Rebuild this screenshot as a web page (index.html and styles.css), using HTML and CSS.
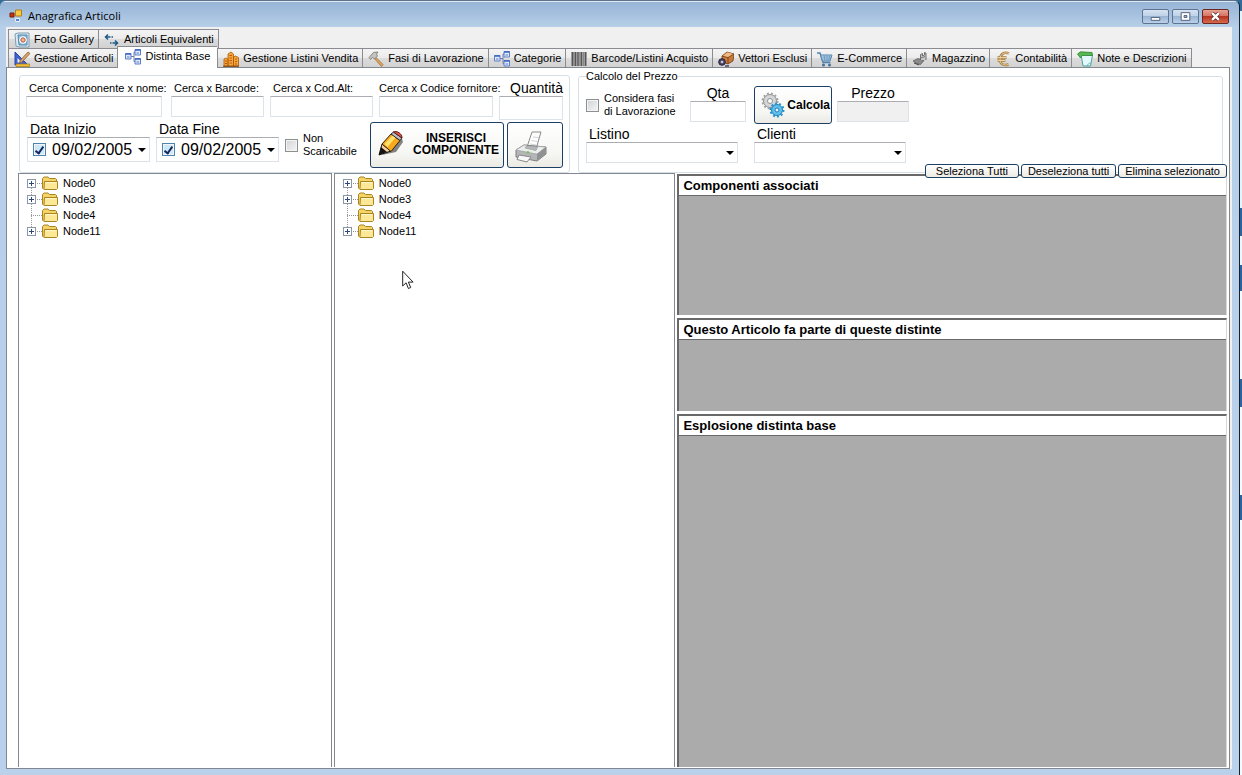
FILE: index.html
```html
<!DOCTYPE html>
<html lang="it">
<head>
<meta charset="utf-8">
<title>Anagrafica Articoli</title>
<link rel="stylesheet" href="styles.css">
</head>
<body>
<svg class="defs" aria-hidden="true">
  <symbol id="i-photo" viewBox="0 0 16 16"><path d="M1 2l3-1 11 0v14l-10 0-3-1z" fill="#dcecf6" stroke="#7f9bb0"/><path d="M4 3h9v10H5z" fill="#8fc1e0" stroke="#4d86ad"/><circle cx="9" cy="8" r="3.3" fill="#fff" stroke="#fff"/><circle cx="9" cy="8" r="2.2" fill="#f0b49a" stroke="#b4583c"/></symbol>
  <symbol id="i-arrows" viewBox="0 0 16 16"><path d="M1.500 5h5M4 2.500L1.500 5 4 7.500M13.500 11h-5M11 8.500l2.500 2.500-2.500 2.500" fill="none" stroke="#1d5a86" stroke-width="1.500"/><path d="M7.500 5h1.500M6 11h1.500" stroke="#1d5a86" stroke-width="1.500"/></symbol>
  <symbol id="i-ruler" viewBox="0 0 16 16"><path d="M1 1v13h13z" fill="#3e63cf" stroke="#2746a4"/><path d="M3.500 7v4.500H8z" fill="#e8eefc"/><path d="M14 1l2 1.500L8 11l-2.500 1 .8-2.700z" fill="#d9a56a" stroke="#7d4f22" stroke-width=".7"/><path d="M2 13h13.500v2.500H2z" fill="#f2c13c" stroke="#a87710" stroke-width=".7"/></symbol>
  <symbol id="i-tree" viewBox="0 0 16 16"><path d="M6 7.500h3M9 3v9.500h1.500M9 3h1.500" fill="none" stroke="#6e7fa8"/><path d="M.5 4.500h5.500v5.500H.5zM10 .5h5.500V6H10zM10 9.500h5.500V15H10z" fill="#dfe9fb" stroke="#5b7fc9"/><path d="M.5 5h5.500M10 1h5.500M10 10h5.500" stroke="#4166bd" stroke-width="1.500"/><path d="M2 8h2.500M11.500 4H14M11.500 13H14" stroke="#5b7fc9"/></symbol>
  <symbol id="i-city" viewBox="0 0 16 16"><path d="M1 15V8l2-1 2 1v7zM5 15V3l3-2 2.500 2v12zM10.500 15V6l2-1 3 1.500V15z" fill="#f5a63a" stroke="#a95a0c" stroke-width=".8"/><path d="M6.500 4.500h2.500M6.500 7h2.500M6.500 9.500h2.500M6.500 12h2.500M12 8h2M12 10.500h2M12 13h2M2 10h2M2 12.500h2" stroke="#c4560b"/><path d="M0 15.300h16" stroke="#7c4410"/></symbol>
  <symbol id="i-hammer" viewBox="0 0 16 16"><path d="M7 5.500l8 8-1.500 2L6 7z" fill="#e3a45c" stroke="#96602a" stroke-width=".7"/><path d="M1 6.500L5.500 1.500 10 1 8.500 3l1 2-3 3-2-1.500L2.500 8.500z" fill="#c3c3bf" stroke="#77736b" stroke-width=".8"/></symbol>
  <symbol id="i-barcode" viewBox="0 0 16 16"><path d="M0 1h16v14H0z" fill="#a8a8a8"/><path d="M1.500 1v14M4.500 1v14M7 1v14M10.500 1v14M14.500 1v14" stroke="#555" stroke-width="1.300"/><path d="M3 1v14M9 1v14M12.500 1v14" stroke="#777" stroke-width=".7"/></symbol>
  <symbol id="i-box" viewBox="0 0 16 16"><path d="M4 5l5-4 7 2-1 7-5 3-6-2z" fill="#c9793a" stroke="#6e3c17" stroke-width=".8"/><path d="M4 5l6 1.500L16 3M10 6.500V13" fill="none" stroke="#6e3c17" stroke-width=".8"/><path d="M5 4.700L9.500 1.300l5.500 1.700-5 3z" fill="#eeb982"/><circle cx="4" cy="11" r="3.300" fill="#4a4566" stroke="#29253d"/><circle cx="4" cy="11" r="1.300" fill="#cfc6d8"/><path d="M7 15h4" stroke="#4a4566" stroke-width="1.500"/></symbol>
  <symbol id="i-cart" viewBox="0 0 16 16"><path d="M0 2h3l3 9.500h7.500" fill="none" stroke="#5284ad" stroke-width="1.400"/><path d="M3.500 4H15l-2 6H5.500z" fill="#c8def0" stroke="#5284ad"/><path d="M4.500 6h10M5 8h9M7 4l1 6M10 4v6M13 4l-1.500 6" stroke="#5f92bb" stroke-width=".8"/><circle cx="6.500" cy="14" r="1.500" fill="#41729a"/><circle cx="12.500" cy="14" r="1.500" fill="#41729a"/></symbol>
  <symbol id="i-store" viewBox="0 0 16 16"><path d="M1 10l5-2.500 6 2-3.500 4-3.500-.8z" fill="#8b8b8b" stroke="#555" stroke-width=".7"/><path d="M8.500 9V3.500l2-1V5l2-1V1.500l1.500 .5v7" fill="#c9c9c9" stroke="#555" stroke-width=".8"/><path d="M9 7l4-1.500" stroke="#666" stroke-width=".8"/><path d="M2 12l5 2" stroke="#444"/></symbol>
  <symbol id="i-euro" viewBox="0 0 16 16"><path d="M14 2.500C9 .5 5.500 3 5 8s4 7 8.500 5.500M2.500 6.500h9M2.500 9.500h8" fill="none" stroke="#a57b3b" stroke-width="2.400"/><path d="M14 2.500C9 .5 5.500 3 5 8s4 7 8.500 5.500M2.500 6.500h9M2.500 9.500h8" fill="none" stroke="#ecd3a1" stroke-width="1"/></symbol>
  <symbol id="i-note" viewBox="0 0 16 16"><path d="M4 3l11.500 1-2 11H6z" fill="#e4f7fb" stroke="#4aa3a0"/><path d="M.5 3L3.500.8 15 1.500l.5 3L5 4.500 3.500 7z" fill="#57b84d" stroke="#27823a" stroke-width=".8"/><path d="M10 15c1-2 2-3 3.800-3" fill="none" stroke="#65b3b0"/></symbol>
  <symbol id="i-folder" viewBox="0 0 16 14"><path d="M.5 12V2.500L2 1h4l1.500 1.500h6l1 1V12l-1 1.500H2z" fill="#f4d469" stroke="#a98420"/><path d="M2.500 5.500h13v7l-1 1H3l-1-1z" fill="#fbe795" stroke="#a98420"/><path d="M3.500 6.700h11" stroke="#fff8d0"/></symbol>
</svg>

<div class="window">
  <header class="titlebar">
    <svg class="app-icon" viewBox="0 0 14 14" aria-hidden="true"><path d="M1 4h4v4H1z" fill="#c33417" stroke="#7c1c08"/><path d="M6.500 1h6v6h-6z" fill="#f7c945" stroke="#b4800f"/><path d="M6.500 9.500h4v3h-4z" fill="#4c85d8" stroke="#e8f0fb"/></svg>
    <h1 class="title">Anagrafica Articoli</h1>
    <div class="controls">
      <button class="ctl" type="button" aria-label="Riduci a icona"><svg viewBox="0 0 26 13"><path d="M8.500 7.500h9v3h-9z" fill="#fff" stroke="#50617a"/></svg></button>
      <button class="ctl" type="button" aria-label="Ingrandisci"><svg viewBox="0 0 26 13"><path d="M8.500 2.500h9v8h-9z" fill="#fff" stroke="#50617a"/><path d="M11.500 5.500h3v2h-3z" fill="#9db8d8" stroke="#50617a"/></svg></button>
      <button class="ctl ctl-close" type="button" aria-label="Chiudi"><svg viewBox="0 0 26 13"><path d="M9.500 3l7 7M16.500 3l-7 7" stroke="#5b2a2a" stroke-width="4"/><path d="M9.500 3l7 7M16.500 3l-7 7" stroke="#fff" stroke-width="2.400"/></svg></button>
    </div>
  </header>

  <main class="client">
    <nav class="tabs" role="tablist" aria-label="Sezioni">
      <div class="tab-row">
        <button class="tab" role="tab" type="button"><svg><use href="#i-photo"/></svg>Foto Gallery</button>
        <button class="tab" role="tab" type="button"><svg><use href="#i-arrows"/></svg>Articoli Equivalenti</button>
      </div>
      <div class="tab-row">
        <button class="tab" role="tab" type="button"><svg><use href="#i-ruler"/></svg>Gestione Articoli</button>
        <button class="tab tab-on" role="tab" type="button" aria-selected="true"><svg><use href="#i-tree"/></svg>Distinta Base</button>
        <button class="tab" role="tab" type="button"><svg><use href="#i-city"/></svg>Gestione Listini Vendita</button>
        <button class="tab" role="tab" type="button"><svg><use href="#i-hammer"/></svg>Fasi di Lavorazione</button>
        <button class="tab" role="tab" type="button"><svg><use href="#i-tree"/></svg>Categorie</button>
        <button class="tab" role="tab" type="button"><svg><use href="#i-barcode"/></svg>Barcode/Listini Acquisto</button>
        <button class="tab" role="tab" type="button"><svg><use href="#i-box"/></svg>Vettori Esclusi</button>
        <button class="tab" role="tab" type="button"><svg><use href="#i-cart"/></svg>E-Commerce</button>
        <button class="tab" role="tab" type="button"><svg><use href="#i-store"/></svg>Magazzino</button>
        <button class="tab" role="tab" type="button"><svg><use href="#i-euro"/></svg>Contabilità</button>
        <button class="tab" role="tab" type="button"><svg><use href="#i-note"/></svg>Note e Descrizioni</button>
      </div>
    </nav>

    <section class="page">
      <div class="toolbar">
        <div class="group search" role="group" aria-label="Inserimento componente">
          <div class="line">
            <div class="field w-name"><label for="nome">Cerca Componente x nome:</label><input id="nome" type="text"></div>
            <div class="field w-bar"><label for="barcode">Cerca x Barcode:</label><input id="barcode" type="text"></div>
            <div class="field w-alt"><label for="alt">Cerca x Cod.Alt:</label><input id="alt" type="text"></div>
            <div class="field w-sup"><label class="flush" for="forn">Cerca x Codice fornitore:</label><input id="forn" type="text"></div>
            <div class="field w-qty"><label class="big end" for="quant">Quantità</label><input class="tall" id="quant" type="text"></div>
          </div>
          <div class="line dates">
            <div class="field w-date">
              <label class="big" for="inizio">Data Inizio</label>
              <div class="date"><input type="checkbox" checked aria-label="Usa data inizio"><input id="inizio" type="text" value="09/02/2005"><button class="drop" type="button" aria-label="Apri calendario inizio"></button></div>
            </div>
            <div class="field w-date">
              <label class="big" for="fine">Data Fine</label>
              <div class="date"><input type="checkbox" checked aria-label="Usa data fine"><input id="fine" type="text" value="09/02/2005"><button class="drop" type="button" aria-label="Apri calendario fine"></button></div>
            </div>
            <label class="check grow"><input type="checkbox"><span>Non<br>Scaricabile</span></label>
            <div class="actions">
              <button class="btn btn-insert" type="button">
                <svg viewBox="0 0 28 28" aria-hidden="true"><path d="M5 25l14-3 7-10-2-6-3 1z" fill="#333" opacity=".6"/><path d="M2 25l3-11 9 7z" fill="#f3d2a0" stroke="#1c1410"/><path d="M2 25l2-8 6 5z" fill="#161212"/><path d="M5 14L14 4l9 6.500L14 21.500z" fill="#f6a91c" stroke="#30200c"/><path d="M7.500 14L16 5l3 2-8.500 10z" fill="#ffe06a"/><path d="M14 4l2.500-2 8.500 6-2 2.500z" fill="#b9bdc2" stroke="#2c2c30"/><path d="M16.500 2c3-2 9 2 8.500 6z" fill="#e0574c" stroke="#5f1712"/></svg>
                <span>INSERISCI<br>COMPONENTE</span>
              </button>
              <button class="btn btn-print" type="button" aria-label="Stampa"><svg viewBox="0 0 34 34"><path d="M13 17L18 2l9 0-5 17z" fill="#fdfdfd" stroke="#8a8a8a"/><path d="M16 14l6 1M17.500 10.500l6 1M19 7l6 .5" stroke="#d0d3d6"/><path d="M2 20l8-5 22 2v7l-9 7-21-4z" fill="#b3b5b6" stroke="#7d7f80"/><path d="M2 20l8-5 3 .3L11 18l11 2.500 2-4.200 8 .8-9 7z" fill="#eceded" stroke="#9d9fa0" stroke-width=".7"/><path d="M23 24v7l9-7v-7z" fill="#8f9192"/><path d="M5 25l12 2-4 5-10-2.500z" fill="#f8f8f8" stroke="#888"/><path d="M13 22l2 .5" stroke="#66c83a" stroke-width="2"/></svg></button>
            </div>
          </div>
        </div>

        <fieldset class="group price">
          <legend>Calcolo del Prezzo</legend>
          <div class="line">
            <label class="check w-phase"><input type="checkbox"><span>Considera fasi<br>di Lavorazione</span></label>
            <div class="field w-small"><label class="big mid" for="qta">Qta</label><input id="qta" type="text"></div>
            <div class="calc">
              <button class="btn btn-calc" type="button">
                <svg viewBox="0 0 24 26" aria-hidden="true"><circle cx="9" cy="9" r="6.500" fill="#d3d5d7" stroke="#8f9294"/><circle cx="9" cy="9" r="7.500" fill="none" stroke="#a2a5a7" stroke-width="2" stroke-dasharray="2 2"/><circle cx="9" cy="9" r="2.500" fill="#fff" stroke="#8f9294"/><circle cx="16" cy="18" r="5.500" fill="#5fc0ec" stroke="#1f7fb8"/><circle cx="16" cy="18" r="6.500" fill="none" stroke="#2a93cd" stroke-width="2" stroke-dasharray="2 2"/><circle cx="16" cy="18" r="2" fill="#e9f8ff" stroke="#1f7fb8"/></svg>
                Calcola
              </button>
              <div class="field w-price"><label class="big mid" for="prezzo">Prezzo</label><input id="prezzo" type="text" disabled></div>
            </div>
          </div>
          <div class="line lists">
            <div class="field w-list"><label class="big" for="listino">Listino</label><div class="combo"><select id="listino"><option></option></select></div></div>
            <div class="field w-list"><label class="big" for="clienti">Clienti</label><div class="combo"><select id="clienti"><option></option></select></div></div>
          </div>
        </fieldset>
      </div>

      <div class="split">
        <ul class="tree" aria-label="Componenti">
          <li class="node more"><svg><use href="#i-folder"/></svg>Node0</li>
          <li class="node more"><svg><use href="#i-folder"/></svg>Node3</li>
          <li class="node"><svg><use href="#i-folder"/></svg>Node4</li>
          <li class="node more"><svg><use href="#i-folder"/></svg>Node11</li>
        </ul>
        <ul class="tree" aria-label="Distinta">
          <li class="node more"><svg><use href="#i-folder"/></svg>Node0</li>
          <li class="node more"><svg><use href="#i-folder"/></svg>Node3</li>
          <li class="node"><svg><use href="#i-folder"/></svg>Node4</li>
          <li class="node more"><svg><use href="#i-folder"/></svg>Node11</li>
        </ul>
        <div class="grids">
          <div class="pick">
            <button class="mini" type="button">Seleziona Tutti</button>
            <button class="mini" type="button">Deseleziona tutti</button>
            <button class="mini" type="button">Elimina selezionato</button>
          </div>
          <section class="grid"><h2>Componenti associati</h2></section>
          <section class="grid"><h2>Questo Articolo fa parte di queste distinte</h2></section>
          <section class="grid"><h2>Esplosione distinta base</h2></section>
        </div>
      </div>
    </section>
  </main>
</div>
<svg class="cursor" viewBox="0 0 12 20" aria-hidden="true"><path d="M.7 1.200v14.800l3.400-3.200 2.300 5.700 2.300-1-2.300-5.400h4.700z" fill="#fff" stroke="#222"/></svg>
</body>
</html>
```

FILE: styles.css
```css
*, *::before, *::after { box-sizing: border-box; }

body {
  margin: 0;
  height: 100vh;
  display: flex;
  padding-right: 2px;
  overflow: hidden;
  font: 11px/13px "Liberation Sans", Arial, sans-serif;
  color: #000;
  background: linear-gradient(#2f6c9c 0 11px, #e2f5fb 11px 208px, #2c639c 208px 236px, #eef8fc 236px 265px, #2c639c 265px 291px, #f4fafd 291px 379px, #2c639c 379px 407px, #f4fafd 407px 495px, #2c639c 495px 520px, #f4fafd 520px);
}

button, input, select { font: inherit; color: inherit; margin: 0; }

.defs { position: absolute; width: 0; height: 0; }

/* Window frame */
.window {
  flex: 1;
  min-width: 0;
  display: flex;
  flex-direction: column;
  padding: 0 7px 6px 6px;
  border-right: 1px solid #14242f;
  border-top: 1px solid #5c7389;
  border-radius: 6px 6px 0 0;
  background: linear-gradient(#dfeaf5 0 1px, #98b5d6 1px, #a4bfde 12px, #b7cfe8 26px, #b9d1ea);
}

.titlebar { display: flex; align-items: center; height: 26px; padding: 4px 3px 0 3px; }
.app-icon { width: 14px; height: 14px; }
.title { flex: 1; margin: 0 0 0 5px; font: 11px/16px "Open Sans", "Noto Sans", sans-serif; }
.controls { display: flex; gap: 3px; }
.ctl {
  width: 27px;
  height: 15px;
  padding: 0;
  border: 1px solid #5f7390;
  border-radius: 2px;
  background: linear-gradient(#d5e3f2, #bdd0e6 50%, #9ab5d3 50%, #b9d0e8);
}
.ctl svg { display: block; width: 100%; height: 100%; }
.ctl-close { border-color: #6b2624; background: linear-gradient(#e5a394, #d6705e 50%, #b93421 50%, #d66a4c); }

.client { flex: 1; min-height: 0; display: flex; flex-direction: column; padding-right: 2px; background: #f0f0f0; }

/* Tabs */
.tabs { padding: 2px 2px 0; }
.tab-row { display: flex; align-items: flex-end; height: 19px; }
.tab {
  display: flex;
  align-items: center;
  gap: 4px;
  height: 19px;
  padding: 1px 4px 0 5px;
  border: 1px solid #8a8c92;
  border-bottom: 0;
  border-right-width: 0;
  background: linear-gradient(#f4f4f4, #ebebeb 50%, #dcdcdc 50%, #d2d2d2);
  white-space: nowrap;
}
.tab:last-child { border-right-width: 1px; }
.tab svg { width: 16px; height: 16px; }
.tab-on { position: relative; height: 22px; padding: 0 7px 2px; margin-bottom: -1px; background: #fff; }

.page { flex: 1; min-height: 0; display: flex; flex-direction: column; padding: 2px 2px 1px 11px; border: 1px solid #828790; background: #fff; }

/* Search and price groups */
.toolbar { display: flex; gap: 8px; padding: 0 4px 0 1px; }
.group { margin: 0; min-width: 0; border: 1px solid #d5dfe5; border-radius: 3px; }
.search { display: flex; flex-direction: column; gap: 2px; margin-top: 5px; padding: 4px 6px 3px; }
.price { flex: 1; padding: 4px 7px 9px; }
.price legend { padding: 0; line-height: 12px; }
.line { display: flex; gap: 6px; }
.dates { padding-left: 1px; }
.lists { gap: 16px; margin-top: 3px; }
.field { display: flex; flex-direction: column; white-space: nowrap; }
.field label { padding-left: 3px; line-height: 16px; }
.field .flush { padding-left: 0; }
.field .big { font-size: 14px; line-height: 15px; }
.field .end { padding: 0; line-height: 16px; text-align: right; }
.field .mid { padding: 0; text-align: center; }
.w-name { width: 136px; margin-right: 3px; }
.w-bar { width: 93px; }
.w-alt { width: 103px; }
.w-sup { width: 114px; }
.w-qty { width: 64px; }
.w-date { width: 123px; }
.w-phase { width: 96px; }
.w-small { width: 56px; }
.w-price { width: 72px; }
.w-list { width: 152px; }

input[type="text"], select {
  width: 100%;
  height: 21px;
  padding: 0 3px;
  border: 1px solid #dde3ea;
  border-top-color: #abadb3;
  border-radius: 1px;
  background: #fff;
}
input.tall[type="text"] { height: 24px; }
input[type="text"]:disabled { background: #f0f0f0; }

input[type="checkbox"] {
  appearance: none;
  display: grid;
  place-items: center;
  flex: none;
  width: 13px;
  height: 13px;
  border: 1px solid #8e8f8f;
  background: linear-gradient(135deg, #cfd2d5, #f6f6f6);
  box-shadow: inset 0 0 0 1px #f4f4f4;
}
input[type="checkbox"]:checked { border-color: #4a86ad; background: #cde9f8; }
input[type="checkbox"]:checked::before {
  content: "";
  width: 5px;
  height: 9px;
  border: solid #15265f;
  border-width: 0 2px 2px 0;
  transform: rotate(35deg);
}

.date {
  display: flex;
  align-items: center;
  height: 25px;
  padding: 0 3px 0 5px;
  border: 1px solid #dde3ea;
  border-top-color: #abadb3;
}
.date input[type="text"] { flex: 1; min-width: 0; padding: 0 0 0 6px; border: 0; background: none; font-size: 16px; }
.drop { display: grid; place-items: center; width: 9px; height: 21px; padding: 0; border: 0; background: none; }
.drop::before, .combo::after { content: ""; border: 4px solid transparent; border-top-color: #000; border-bottom: 0; }
.combo { display: grid; align-items: center; }
.combo select { grid-area: 1 / 1; appearance: none; }
.combo::after { grid-area: 1 / 1; justify-self: end; margin-right: 4px; pointer-events: none; }

.check { display: flex; align-items: center; gap: 5px; white-space: nowrap; }
.grow { flex: 1; }
.actions { display: flex; gap: 3px; }

.btn {
  display: flex;
  align-items: center;
  border: 1px solid #1c3f66;
  border-radius: 3px;
  background: linear-gradient(#fff, #f6f6f3 70%, #ebeae4);
  font-weight: bold;
  font-size: 12px;
  line-height: 12px;
}
.btn-insert { width: 134px; height: 46px; padding: 0 4px 2px 6px; justify-content: space-between; }
.btn-insert svg { width: 28px; height: 28px; }
.btn-print { width: 56px; height: 46px; padding: 3px 0 0 6px; }
.btn-print svg { width: 34px; height: 34px; }
.calc { display: flex; gap: 5px; }
.calc .field, .w-small { height: 36px; }
.btn-calc { width: 78px; height: 38px; padding: 0 1px 0 6px; justify-content: space-between; }
.btn-calc svg { width: 24px; height: 26px; }
.price .line:first-of-type { gap: 8px; }

/* Trees and grids */
.split { flex: 1; min-height: 0; display: grid; grid-template-columns: 314fr 342fr 550fr; gap: 2px; }
.tree { margin: 0; padding: 1px 0 0 8px; list-style: none; border: 1px solid #828790; border-bottom: 0; }
.node {
  position: relative;
  display: flex;
  align-items: center;
  gap: 5px;
  height: 16px;
  padding-left: 15px;
  background: repeating-linear-gradient(90deg, #999 0 1px, transparent 1px 2px) 4px 8px / 11px 1px no-repeat;
}
.node svg { width: 16px; height: 14px; }
.node:not(:last-child)::after { content: ""; position: absolute; left: 4px; top: 8px; height: 16px; border-left: 1px dotted #999; }
.more::before {
  content: "";
  position: absolute;
  left: 0;
  top: 4px;
  z-index: 1;
  width: 9px;
  height: 9px;
  border: 1px solid #8b97a8;
  background: linear-gradient(#2b4a80, #2b4a80) center / 5px 1px no-repeat, linear-gradient(#2b4a80, #2b4a80) center / 1px 5px no-repeat, #fff;
}

.grids { position: relative; display: grid; grid-template-rows: 141px 93px 1fr; gap: 3px; padding-top: 1px; }
.grid { border: 1px solid #d8d8d8; border-width: 2px 1px 0 2px; border-top-color: #696969; border-left-color: #696969; background: #ababab; }
.grid h2 { margin: 0; padding: 0 4px; border-bottom: 1px solid #696969; background: #fff; font-size: 13px; line-height: 19px; }
.pick { position: absolute; right: 0; top: -9px; display: flex; gap: 2px; }
.mini { height: 14px; padding: 0 6px; min-width: 94px; border: 1px solid #1c3f66; border-radius: 3px; background: linear-gradient(#fff, #eceae4); line-height: 11px; white-space: nowrap; }

.cursor { position: absolute; left: 402px; top: 270px; width: 12px; height: 20px; pointer-events: none; }
```
